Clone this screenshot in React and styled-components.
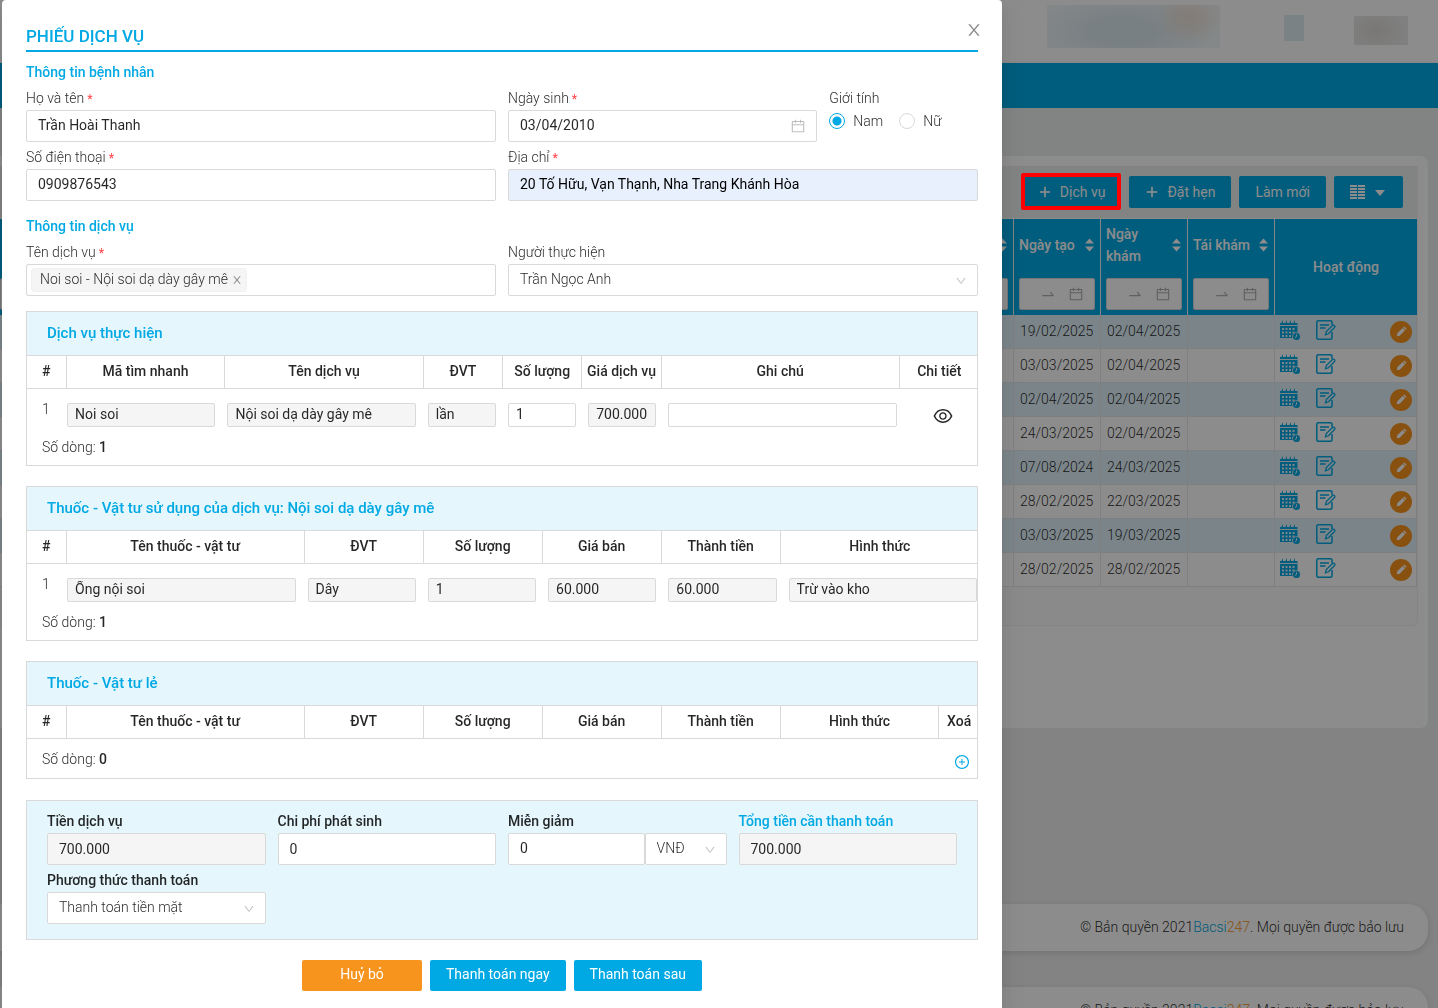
import React, { useState } from 'react';
import styled, { createGlobalStyle, css } from 'styled-components';
import {
    AiOutlineCalendar,
    AiOutlineDown,
    AiOutlineEye,
    AiOutlinePlus,
    AiOutlinePlusCircle,
    AiOutlineSwapRight,
} from 'react-icons/ai';

const BLUE = '#00a9e3';
const ORANGE = '#f7941e';
const BORDER = '#d9d9d9';

const visits = [
    ['19/02/2025', '02/04/2025'],
    ['03/03/2025', '02/04/2025'],
    ['02/04/2025', '02/04/2025'],
    ['24/03/2025', '02/04/2025'],
    ['07/08/2024', '24/03/2025'],
    ['28/02/2025', '22/03/2025'],
    ['03/03/2025', '19/03/2025'],
    ['28/02/2025', '28/02/2025'],
];

const serviceColumns = ['#', 'Mã tìm nhanh', 'Tên dịch vụ', 'ĐVT', 'Số lượng', 'Giá dịch vụ', 'Ghi chú', 'Chi tiết'];
const supplyColumns = ['#', 'Tên thuốc - vật tư', 'ĐVT', 'Số lượng', 'Giá bán', 'Thành tiền', 'Hình thức'];

function CloseIcon({ size }) {
    return (
        <svg width={size} height={size} viewBox="0 0 1024 1024" fill="currentColor" aria-hidden="true">
            <path d="M563.8 512l262.5-312.900c4.400-5.200.7-13.100-6.100-13.100h-79.800c-4.700 0-9.200 2.100-12.300 5.700L511.600 449.800 295.100 191.700c-3-3.600-7.500-5.700-12.300-5.700H203c-6.800 0-10.500 7.900-6.100 13.100L459.400 512 196.900 824.900A7.950 7.950 0 00203 838h79.800c4.700 0 9.200-2.100 12.300-5.700l216.500-258.100 216.500 258.100c3 3.600 7.500 5.700 12.300 5.700h79.800c6.800 0 10.500-7.900 6.100-13.100L563.800 512z" />
        </svg>
    );
}

function SortIcon() {
    return (
        <svg width="9" height="14" viewBox="0 0 9 14" fill="currentColor" aria-hidden="true">
            <path d="M4.5 0.5 9 5.5H0zM4.5 13.5 0 8.5h9z" />
        </svg>
    );
}

function ColumnsIcon() {
    return (
        <svg width="37" height="14" viewBox="0 0 37 14" fill="currentColor" aria-hidden="true">
            {[0, 3, 6, 9, 12].map((y) => (
                <path key={y} d={`M0 ${y}h7v2H0zM8 ${y}h7v2H8z`} />
            ))}
            <path d="M25 5h10l-5 6z" />
        </svg>
    );
}

function ScheduleIcon() {
    return (
        <svg width="20" height="20" viewBox="0 0 20 20" aria-hidden="true">
            <path fill={BLUE} d="M0 3h1.500L3 0v3h2.500L7 0v3h2.500L11 0v3h2.500L15 0v3h2.500v15H0z" />
            <path stroke="#e1f2fa" strokeWidth="1" d="M0 5.500h17.500" />
            <g fill="#e1f2fa">
                {[2, 5.500, 9, 12.500].map((x) =>
                    [8, 11.500, 15].map((y) => <rect key={`${x}-${y}`} x={x} y={y} width="2" height="2" />)
                )}
            </g>
            <circle cx="16.500" cy="16.500" r="4.200" fill="#e1f2fa" />
            <circle cx="16.500" cy="16.500" r="3.500" fill={BLUE} />
            <path d="M16.500 14.200v2.500l-1.500.8" stroke="#e1f2fa" strokeWidth="1" fill="none" />
        </svg>
    );
}

function NoteIcon() {
    return (
        <svg width="20" height="20" viewBox="0 0 20 20" fill="none" stroke={BLUE} strokeWidth="1.500" aria-hidden="true">
            <path d="M16 5V2.300Q16 .8 14.500 .8H2.300Q.8.8.8 2.300v15.400q0 1.500 1.500 1.500h12.200q1.500 0 1.500-1.500V12" />
            <path d="M4 5h9M4 8h5.500" />
            <path d="m9.500 14.800.8-3.300 6.200-6q1.200-.8 2 .1t0 1.900l-6 6.300z" strokeWidth="1.300" />
        </svg>
    );
}

function PencilIcon() {
    return (
        <svg width="22" height="22" viewBox="0 0 22 22" aria-hidden="true">
            <circle cx="11" cy="11" r="11" fill={ORANGE} />
            <g transform="rotate(45 11 11)" fill="#fff">
                <path d="M9.300 4.800h3.400v1.400H9.300zM9.300 7h3.400v7.500L11 17l-1.700-2.500z" />
            </g>
        </svg>
    );
}

function TextField({ id, label, required, bold, accent, span, children, ...input }) {
    return (
        <Field $span={span}>
            <Label htmlFor={id} $bold={bold} $accent={accent}>
                {label}
                {required && <Required>*</Required>}
            </Label>
            {children || <TextInput id={id} {...input} />}
        </Field>
    );
}

function SelectBox({ id, value, label }) {
    return (
        <SelectWrap>
            <Select id={id} aria-label={label} defaultValue={value}>
                <option>{value}</option>
            </Select>
            <AiOutlineDown size={12} />
        </SelectWrap>
    );
}

function HeadRow({ columns, template }) {
    return (
        <thead>
            <HeadTr $template={template}>
                {columns.map((column) => (
                    <th key={column} scope="col">{column}</th>
                ))}
            </HeadTr>
        </thead>
    );
}

function BodyRow({ cells, columns, template, children }) {
    return (
        <BodyTr $template={template}>
            <td>1</td>
            {cells.map((cell, i) => (
                <td key={columns[i + 1]}>
                    <CellInput aria-label={columns[i + 1]} defaultValue={cell.value} disabled={!cell.editable} />
                </td>
            ))}
            {children}
        </BodyTr>
    );
}

function Footer() {
    return (
        <PageFooter>
            © Bản quyền 2021<a href="#home">Bacsi<span>247</span></a>. Mọi quyền được bảo lưu
        </PageFooter>
    );
}

function RangeFilter({ label }) {
    return (
        <Filter type="button" aria-label={label}>
            <AiOutlineSwapRight size={16} />
            <AiOutlineCalendar size={16} />
        </Filter>
    );
}

function VisitList() {
    return (
        <Page>
            <TopBar>
                <Blob $kind="logo" />
                <Blob $kind="bell" />
                <Blob $kind="user" />
            </TopBar>
            <NavBar />
            <Content>
                <Card>
                    <TableFrame>
                        <Toolbar>
                            <ToolButton type="button" $marked><AiOutlinePlus size={14} />Dịch vụ</ToolButton>
                            <ToolButton type="button"><AiOutlinePlus size={14} />Đặt hẹn</ToolButton>
                            <ToolButton type="button">Làm mới</ToolButton>
                            <ToolButton type="button" aria-label="Cột hiển thị"><ColumnsIcon /></ToolButton>
                        </Toolbar>
                        <VisitTable>
                            <colgroup>
                                <col />
                                <col className="date" />
                                <col className="date" />
                                <col className="date" />
                                <col className="actions" />
                            </colgroup>
                            <thead>
                                <tr>
                                    {['', 'Ngày tạo', 'Ngày khám', 'Tái khám'].map((title) => (
                                        <th key={title} scope="col">
                                            <HeadTitle><span>{title}</span><SortIcon /></HeadTitle>
                                            <RangeFilter label={title || 'Lọc'} />
                                        </th>
                                    ))}
                                    <th scope="col" className="actions">Hoạt động</th>
                                </tr>
                            </thead>
                            <tbody>
                                {visits.map(([created, visited], i) => (
                                    <tr key={i}>
                                        <td />
                                        <td>{created}</td>
                                        <td>{visited}</td>
                                        <td />
                                        <td>
                                            <Actions>
                                                <IconButton type="button" aria-label="Lịch hẹn"><ScheduleIcon /></IconButton>
                                                <IconButton type="button" aria-label="Ghi chú"><NoteIcon /></IconButton>
                                                <IconButton type="button" aria-label="Sửa"><PencilIcon /></IconButton>
                                            </Actions>
                                        </td>
                                    </tr>
                                ))}
                            </tbody>
                        </VisitTable>
                    </TableFrame>
                </Card>
            </Content>
            <Footer />
            <Footer />
        </Page>
    );
}

function ServiceModal() {
    const [gender, setGender] = useState('Nam');
    const serviceHead = '1fr 4fr 5fr 2fr 2fr 2fr 6fr 2fr';
    const supplyHead = '1fr 6fr 3fr 3fr 3fr 3fr 5fr';

    return (
        <Overlay>
            <Dialog role="dialog" aria-labelledby="dialog-title">
                <DialogTitle id="dialog-title">PHIẾU DỊCH VỤ</DialogTitle>
                <CloseButton type="button" aria-label="Đóng"><CloseIcon size={18} /></CloseButton>

                <SectionTitle $first>Thông tin bệnh nhân</SectionTitle>
                <FormGrid>
                    <TextField id="name" label="Họ và tên" required span={6} defaultValue="Trần Hoài Thanh" />
                    <TextField id="birthday" label="Ngày sinh" required span={4}>
                        <SelectWrap $tone="date">
                            <TextInput id="birthday" defaultValue="03/04/2010" />
                            <AiOutlineCalendar size={16} />
                        </SelectWrap>
                    </TextField>
                    <GenderGroup>
                        <legend>Giới tính</legend>
                        <div>
                            {['Nam', 'Nữ'].map((option) => (
                                <label key={option}>
                                    <input
                                        type="radio"
                                        name="gender"
                                        checked={gender === option}
                                        onChange={() => setGender(option)}
                                    />
                                    {option}
                                </label>
                            ))}
                        </div>
                    </GenderGroup>
                    <TextField id="phone" label="Số điện thoại" required span={6} defaultValue="0909876543" />
                    <TextField
                        id="address"
                        label="Địa chỉ"
                        required
                        span={6}
                        $filled
                        defaultValue="20 Tố Hữu, Vạn Thạnh, Nha Trang Khánh Hòa"
                    />
                </FormGrid>

                <SectionTitle>Thông tin dịch vụ</SectionTitle>
                <FormGrid>
                    <TextField id="services" label="Tên dịch vụ" required span={6}>
                        <TagBox>
                            <Tag>
                                Noi soi - Nội soi dạ dày gây mê
                                <button type="button" aria-label="Xoá"><CloseIcon size={12} /></button>
                            </Tag>
                            <input id="services" />
                        </TagBox>
                    </TextField>
                    <TextField id="staff" label="Người thực hiện" span={6}>
                        <SelectBox id="staff" value="Trần Ngọc Anh" />
                    </TextField>
                </FormGrid>

                <Panels>
                    <Panel>
                        <h3>Dịch vụ thực hiện</h3>
                        <PanelTable>
                            <HeadRow columns={serviceColumns} template={serviceHead} />
                            <tbody>
                                <BodyRow
                                    columns={serviceColumns}
                                    template={serviceHead}
                                    cells={[
                                        { value: 'Noi soi' },
                                        { value: 'Nội soi dạ dày gây mê' },
                                        { value: 'lần' },
                                        { value: '1', editable: true },
                                        { value: '700.000' },
                                        { value: '', editable: true },
                                    ]}
                                >
                                    <td>
                                        <DetailButton type="button" aria-label="Chi tiết"><AiOutlineEye size={22} /></DetailButton>
                                    </td>
                                </BodyRow>
                            </tbody>
                        </PanelTable>
                        <RowCount><span>Số dòng: <b>1</b></span></RowCount>
                    </Panel>

                    <Panel>
                        <h3>Thuốc - Vật tư sử dụng của dịch vụ: Nội soi dạ dày gây mê</h3>
                        <PanelTable>
                            <HeadRow columns={supplyColumns} template={supplyHead} />
                            <tbody>
                                <BodyRow
                                    columns={supplyColumns}
                                    template={supplyHead}
                                    cells={[
                                        { value: 'Ống nội soi' },
                                        { value: 'Dây' },
                                        { value: '1' },
                                        { value: '60.000' },
                                        { value: '60.000' },
                                        { value: 'Trừ vào kho' },
                                    ]}
                                />
                            </tbody>
                        </PanelTable>
                        <RowCount><span>Số dòng: <b>1</b></span></RowCount>
                    </Panel>

                    <Panel>
                        <h3>Thuốc - Vật tư lẻ</h3>
                        <PanelTable>
                            <HeadRow columns={[...supplyColumns, 'Xoá']} template="1fr 6fr 3fr 3fr 3fr 3fr 4fr 1fr" />
                        </PanelTable>
                        <RowCount>
                            <span>Số dòng: <b>0</b></span>
                            <AddButton type="button" aria-label="Thêm dòng"><AiOutlinePlusCircle size={16} /></AddButton>
                        </RowCount>
                    </Panel>
                </Panels>

                <Summary>
                    <TextField id="fee" label="Tiền dịch vụ" bold defaultValue="700.000" disabled />
                    <TextField id="extra" label="Chi phí phát sinh" bold defaultValue="0" $centered />
                    <TextField id="discount" label="Miễn giảm" bold>
                        <Discount>
                            <TextInput id="discount" defaultValue="0" />
                            <SelectBox label="Đơn vị" value="VNĐ" />
                        </Discount>
                    </TextField>
                    <TextField id="total" label="Tổng tiền cần thanh toán" bold accent defaultValue="700.000" disabled />
                    <TextField id="method" label="Phương thức thanh toán" bold>
                        <SelectBox id="method" value="Thanh toán tiền mặt" />
                    </TextField>
                </Summary>

                <Buttons>
                    <Button type="button" $color={ORANGE}>Huỷ bỏ</Button>
                    <Button type="button">Thanh toán ngay</Button>
                    <Button type="button">Thanh toán sau</Button>
                </Buttons>
            </Dialog>
        </Overlay>
    );
}

function App() {
    return (
        <>
            <GlobalStyle />
            <VisitList />
            <ServiceModal />
        </>
    );
}

export default App;

const GlobalStyle = createGlobalStyle`
    *, *::before, *::after {
        box-sizing: border-box;
    }

    body {
        margin: 0;
        font: 300 14px/22px Roboto, "Noto Sans", sans-serif;
        color: rgba(0, 0, 0, 0.85);
    }

    button, input, select {
        font: inherit;
        color: inherit;
    }

    button {
        cursor: pointer;
    }

    h2, h3 {
        margin: 0;
    }

    svg {
        display: block;
        flex: none;
    }
`;

const Page = styled.div`
    height: 100vh;
    overflow: hidden;
    background: #eee;
`;

const TopBar = styled.header`
    display: flex;
    align-items: flex-start;
    justify-content: flex-end;
    height: 63px;
    padding-right: 30px;
    background: #fff;
`;

const blobs = {
    logo: css`
        width: 173px;
        height: 43px;
        margin: 5px 64px 0 0;
        background:
            radial-gradient(ellipse 34px 28px at 142px 12px, #eee2d8, transparent),
            radial-gradient(ellipse 95px 40px at 76px 26px, #dbe9ef 30%, transparent),
            #f3f7f9;
    `,
    bell: css`
        width: 20px;
        height: 26px;
        margin: 15px 50px 0 0;
        background: #e1edf3;
    `,
    user: css`
        width: 54px;
        height: 29px;
        margin-top: 16px;
        background: radial-gradient(ellipse 30px 22px at 22px 15px, #dcdad6, #e9e9e9);
    `,
};

const Blob = styled.div`
    ${(props) => blobs[props.$kind]}
`;

const NavBar = styled.nav`
    height: 45px;
    background: ${BLUE};
    box-shadow: 0 2px 6px rgba(0, 0, 0, 0.15);
`;

const Content = styled.main`
    padding-top: 48px;
    margin-bottom: 176px;
    background: #ebf0ee;
`;

const Card = styled.section`
    min-height: 572px;
    margin-right: 10px;
    padding: 10px 10px 102px 0;
    border-radius: 0 8px 8px 0;
    background: #fff;
`;

const TableFrame = styled.div`
    padding-bottom: 38px;
    border: solid #f0f0f0;
    border-width: 0 1px 1px 0;
    border-radius: 0 0 6px 0;
    background: #fbfbfb;
`;

const Toolbar = styled.div`
    display: flex;
    justify-content: flex-end;
    gap: 8px;
    padding: 10px 14px 10px 0;
    margin-bottom: 1px;
    background: #ebf0ee;
`;

const ToolButton = styled.button`
    position: relative;
    display: flex;
    align-items: center;
    gap: 8px;
    height: 32px;
    padding: 0 16px;
    border: 0;
    border-radius: 2px;
    background: ${BLUE};
    color: #fff;
    font-weight: 400;

    svg[stroke] {
        stroke-width: 50;
    }

    ${(props) => props.$marked && css`
        &::after {
            content: '';
            position: absolute;
            inset: -3px 0 -2px -1px;
            z-index: 20;
            border: 4px solid #f00;
            border-radius: 2px;
        }
    `}
`;

const VisitTable = styled.table`
    width: 100%;
    table-layout: fixed;
    border-collapse: separate;
    border-spacing: 0;

    col.date {
        width: 87px;
    }

    col.actions {
        width: 142px;
    }

    th {
        height: 96px;
        padding: 4px 5px 5px;
        border-right: 1px solid #f0f0f0;
        background: ${BLUE};
        color: #fff;
        font-weight: 500;
        text-align: left;
        vertical-align: top;

        &:first-child {
            padding-left: 0;
        }

        &.actions {
            border-right: 0;
            text-align: center;
            vertical-align: middle;
        }
    }

    td {
        height: 34px;
        padding: 0 6px 2px;
        border: solid #e8e8e8;
        border-width: 0 1px 1px 0;
        background: #fff;

        &:last-child {
            padding: 0 4px 0 5px;
        }
    }

    tr:nth-child(odd) td {
        background: #e1f2fa;
    }
`;

const HeadTitle = styled.div`
    display: flex;
    align-items: center;
    justify-content: space-between;
    height: 44px;
    margin-bottom: 11px;
    padding-right: 1px;
`;

const Filter = styled.button`
    display: flex;
    align-items: center;
    justify-content: flex-end;
    gap: 12px;
    width: 100%;
    height: 32px;
    padding: 0 10px;
    border: 1px solid ${BORDER};
    border-radius: 2px;
    background: #fff;
    color: #b0b0b0;
`;

const Actions = styled.div`
    display: flex;
    align-items: flex-start;
    gap: 16px;

    button:last-child {
        margin: 1px 0 0 auto;
    }
`;

const IconButton = styled.button`
    padding: 0;
    border: 0;
    background: none;
`;

const PageFooter = styled.footer`
    height: 47px;
    margin: 0 10px 36px 0;
    padding: 12px 24px 0 0;
    border-radius: 0 20px 20px 0;
    background: #fff;
    box-shadow: 0 2px 6px rgba(0, 0, 0, 0.12);
    text-align: right;

    a {
        color: ${BLUE};
        text-decoration: none;
    }

    a span {
        color: ${ORANGE};
    }
`;

const Overlay = styled.div`
    position: fixed;
    inset: 0;
    z-index: 10;
    overflow: hidden;
    padding-left: 2px;
    background: rgba(0, 0, 0, 0.45);
`;

const Dialog = styled.div`
    position: relative;
    width: 100%;
    max-width: 1000px;
    min-height: 100%;
    padding: 24px;
    border-radius: 4px 4px 0 0;
    background: #fff;
    box-shadow: 0 6px 16px rgba(0, 0, 0, 0.08), 0 9px 28px 8px rgba(0, 0, 0, 0.05);
`;

const DialogTitle = styled.h2`
    padding-bottom: 2px;
    border-bottom: 2px solid ${BLUE};
    color: ${BLUE};
    font-size: 17px;
    line-height: 24px;
    font-weight: 500;
`;

const CloseButton = styled.button`
    position: absolute;
    top: 13px;
    right: 11px;
    padding: 8px;
    border: 0;
    background: none;
    color: rgba(0, 0, 0, 0.45);
`;

const SectionTitle = styled.h3`
    margin: ${(props) => (props.$first ? '9px' : '14px')} 0 5px;
    color: ${BLUE};
    font-size: 14px;
    font-weight: 500;
`;

const FormGrid = styled.div`
    display: grid;
    grid-template-columns: repeat(12, 1fr);
    gap: 5px 12px;
`;

const Field = styled.div`
    min-width: 0;
    ${(props) => props.$span && css`grid-column: span ${props.$span};`}
`;

const Label = styled.label`
    display: block;
    padding-bottom: 2px;
    line-height: 20px;
    font-weight: ${(props) => (props.$bold ? 500 : 300)};
    ${(props) => props.$accent && css`color: ${BLUE};`}
`;

const Required = styled.span`
    margin-left: 3px;
    color: #ff4d4f;
    font-size: 12px;
    line-height: 1;
    font-weight: 500;
`;

const TextInput = styled.input`
    display: block;
    width: 100%;
    height: 32px;
    padding: 0 11px ${(props) => (props.$centered ? '0' : '2px')};
    border: 1px solid ${BORDER};
    border-radius: 2px;
    background: ${(props) => (props.$filled ? '#e8f0fe' : '#fff')};
    font-weight: 400;
    ${(props) => props.$filled && css`color: #000;`}

    &:disabled {
        padding-bottom: 0;
        background: #f5f5f5;
    }
`;

const SelectWrap = styled.div`
    position: relative;

    > svg {
        position: absolute;
        top: ${(props) => (props.$tone === 'date' ? '8px' : '11px')};
        right: 11px;
        color: rgba(0, 0, 0, 0.25);
        pointer-events: none;
    }
`;

const Select = styled.select`
    display: block;
    appearance: none;
    width: 100%;
    height: 32px;
    padding: 0 30px 2px 11px;
    border: 1px solid ${BORDER};
    border-radius: 2px;
    background: #fff;
`;

const GenderGroup = styled.fieldset`
    grid-column: span 2;
    margin: 0;
    padding: 0;
    border: 0;

    legend {
        padding: 0 0 2px;
        line-height: 20px;
    }

    div {
        display: flex;
        gap: 16px;
    }

    label {
        display: flex;
        align-items: center;
        gap: 8px;
    }

    input {
        appearance: none;
        width: 16px;
        height: 16px;
        margin: 0;
        border: 1px solid ${BORDER};
        border-radius: 50%;

        &:checked {
            border-color: ${BLUE};
            background: radial-gradient(circle, ${BLUE} 4px, #fff 5px);
        }
    }
`;

const TagBox = styled.div`
    display: flex;
    align-items: center;
    height: 32px;
    padding: 0 4px;
    border: 1px solid ${BORDER};
    border-radius: 2px;

    > input {
        flex: 1;
        min-width: 0;
        border: 0;
        outline: 0;
        background: none;
    }
`;

const Tag = styled.span`
    display: flex;
    gap: 3px;
    height: 24px;
    padding: 0 3px 0 8px;
    border: 1px solid #f0f0f0;
    border-radius: 4px;
    background: #f5f5f5;
    line-height: 20px;

    button {
        padding: 0;
        border: 0;
        background: none;
        color: rgba(0, 0, 0, 0.45);
    }
`;

const Panels = styled.div`
    display: flex;
    flex-direction: column;
    gap: 20px;
    margin-top: 15px;
`;

const Panel = styled.section`
    overflow: hidden;
    border: 1px solid ${BORDER};

    h3 {
        padding: 10px 20px 11px;
        background: #e5f6fd;
        color: ${BLUE};
        font-size: 15px;
        font-weight: 500;
    }
`;

const PanelTable = styled.table`
    display: block;

    thead, tbody {
        display: block;
    }

    th, td {
        padding: 0;
    }
`;

/* rows run slightly wider than the panel, which clips them */
const HeadTr = styled.tr`
    display: grid;
    grid-template-columns: ${(props) => props.$template};
    margin-right: -2px;
    border: solid ${BORDER};
    border-width: 1px 0;

    th {
        padding: 4px 0 6px;
        border-right: 1px solid ${BORDER};
        font-weight: 500;
        white-space: nowrap;

        &:last-child {
            border-right: 0;
        }
    }
`;

const BodyTr = styled.tr`
    display: grid;
    grid-template-columns: ${(props) => props.$template};
    margin-right: -12px;
    padding-top: 10px;

    td {
        min-width: 0;
        padding: 4px 12px 0 0;

        &:first-child {
            padding: 0 0 0 15px;
            line-height: 20px;
        }
    }
`;

const CellInput = styled.input`
    display: block;
    width: 100%;
    height: 24px;
    padding: 0 7px 2px;
    border: 1px solid ${BORDER};
    border-radius: 2px;
    background: #fff;
    font-weight: 400;

    &:disabled {
        background: #f5f5f5;
    }
`;

const DetailButton = styled.button`
    display: block;
    margin: 2px auto 0;
    padding: 0;
    border: 0;
    background: none;
`;

const RowCount = styled.div`
    display: flex;
    justify-content: space-between;
    padding: 9px 7px 7px 15px;

    b {
        font-weight: 500;
    }
`;

const AddButton = styled.button`
    padding: 6px 0 1px;
    border: 0;
    background: none;
    color: ${BLUE};
`;

const Summary = styled.section`
    display: grid;
    grid-template-columns: repeat(4, 1fr);
    gap: 5px 12px;
    margin-top: 21px;
    padding: 10px 20px 15px;
    border: 1px solid ${BORDER};
    background: #e5f6fd;
`;

const Discount = styled.div`
    display: grid;
    grid-template-columns: 5fr 3fr;
`;

const Buttons = styled.div`
    display: flex;
    justify-content: center;
    gap: 8px;
    margin-top: 20px;
`;

const Button = styled.button`
    min-width: 120px;
    height: 31px;
    padding: 0 16px 3px;
    border: 0;
    border-radius: 2px;
    background: ${(props) => props.$color || BLUE};
    color: #fff;
    font-weight: 400;
`;
